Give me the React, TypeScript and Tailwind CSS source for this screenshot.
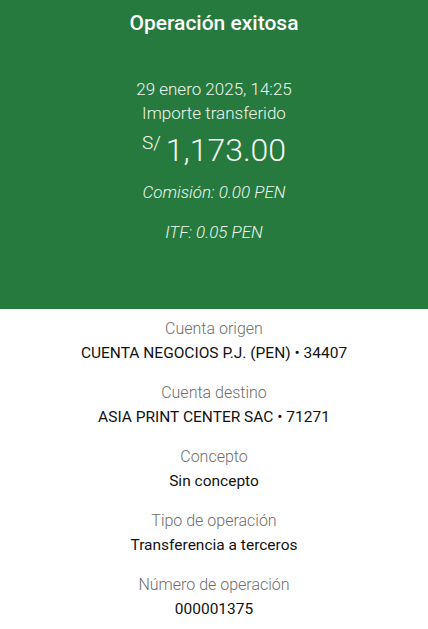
import React from 'react';

const details = [
    { label: 'Cuenta origen', value: 'CUENTA NEGOCIOS P.J. (PEN) • 34407' },
    { label: 'Cuenta destino', value: 'ASIA PRINT CENTER SAC • 71271' },
    { label: 'Concepto', value: 'Sin concepto' },
    { label: 'Tipo de operación', value: 'Transferencia a terceros' },
    { label: 'Número de operación', value: '000001375' },
];

const DetailRow = ({ label, value }: { label: string; value: string }) => (
    <div className="flex flex-col items-center h-[64px]">
        <span className="text-[16px] leading-[24px] text-[#6e6e6e] font-light">{label}</span>
        <span className="text-[15.5px] leading-[24px] text-[#121212]">{value}</span>
    </div>
);

const App = () => {
    return (
        <div className="w-[428px] h-[629px] overflow-hidden bg-white font-['Roboto',sans-serif]">
            <section className="h-[309px] bg-[#277a3e] flex flex-col items-center text-white">
                <h1 className="mt-[10px] text-[21px] leading-[26px] font-medium">Operación exitosa</h1>
                <p className="mt-[41px] text-[17px] leading-[24px] font-light text-[#eef6f0]">29 enero 2025, 14:25</p>
                <p className="text-[17px] leading-[24px] font-light text-[#eef6f0]">Importe transferido</p>
                <div className="mt-[4px] flex items-start font-light text-[#f4faf5]">
                    <span className="text-[19px] leading-[24px] mt-[2px] mr-[5px]">S/</span>
                    <span className="text-[32px] leading-[42px]">1,173.00</span>
                </div>
                <p className="mt-[9px] text-[17px] leading-[24px] italic font-light text-[#eef6f0]">Comisión: 0.00 PEN</p>
                <p className="mt-[16px] text-[17px] leading-[24px] italic font-light text-[#eef6f0]">ITF: 0.05 PEN</p>
            </section>
            <section className="pt-[8px] flex flex-col">
                {details.map((d) => (
                    <DetailRow key={d.label} label={d.label} value={d.value} />
                ))}
            </section>
        </div>
    );
};

export default App;
